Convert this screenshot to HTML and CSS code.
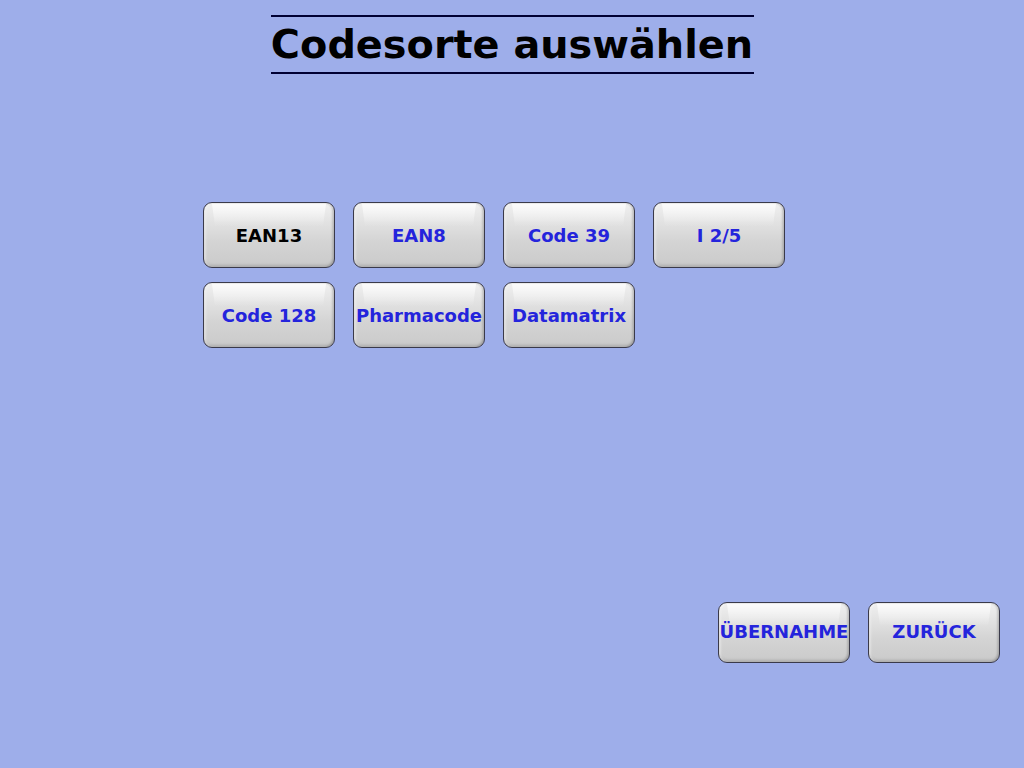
FILE: index.html
```html
<!DOCTYPE html>
<html>
<head>
<meta charset="utf-8">
<link rel="stylesheet" href="styles.css">
</head>
<body>
<div class="screen">
  <header class="title-wrap">
    <h1 class="title">Codesorte auswählen</h1>
  </header>
  <div class="grid">
    <button class="btn selected">EAN13</button>
    <button class="btn">EAN8</button>
    <button class="btn">Code 39</button>
    <button class="btn">I 2/5</button>
    <button class="btn">Code 128</button>
    <button class="btn">Pharmacode</button>
    <button class="btn">Datamatrix</button>
  </div>
  <div class="actions">
    <button class="btn small">ÜBERNAHME</button>
    <button class="btn small">ZURÜCK</button>
  </div>
</div>
</body>
</html>
```
FILE: styles.css
```css
html, body {
  margin: 0;
  padding: 0;
  background: #9eaeea;
}
.screen {
  width: 1024px;
  height: 768px;
  position: relative;
  font-family: "DejaVu Sans", sans-serif;
}
.title-wrap {
  display: flex;
  justify-content: center;
  padding-top: 15px;
}
.title {
  margin: 0;
  font-size: 39.8px;
  font-weight: bold;
  color: #000;
  border-top: 2px solid #000033;
  border-bottom: 2px solid #000033;
  width: 483px;
  text-align: center;
  white-space: nowrap;
  line-height: 55px;
  height: 55px;
}
.grid {
  display: grid;
  grid-template-columns: repeat(4, 132px);
  grid-auto-rows: 66px;
  column-gap: 18px;
  row-gap: 14px;
  margin-left: 203px;
  margin-top: 128px;
}
.btn {
  position: relative;
  box-sizing: border-box;
  width: 132px;
  height: 66px;
  padding: 0;
  border: 1px solid #3a3a4a;
  border-radius: 9px;
  background: linear-gradient(to bottom, #f0f0f0 0%, #e2e2e2 30%, #d4d4d4 60%, #cacaca 100%);
  box-shadow: inset 0 -2px 3px rgba(0,0,0,0.15), inset 2px 0 2px rgba(255,255,255,0.5), inset -2px 0 2px rgba(0,0,0,0.12);
  font-family: "DejaVu Sans", sans-serif;
  font-weight: bold;
  font-size: 18px;
  color: #2424dc;
  overflow: hidden;
  white-space: nowrap;
}
.btn::before {
  content: "";
  position: absolute;
  left: 8px;
  right: 8px;
  top: 1px;
  height: 22px;
  background: linear-gradient(to bottom, rgba(255,255,255,0.75), rgba(255,255,255,0));
  clip-path: polygon(0 0, 100% 0, calc(100% - 3px) 100%, 3px 100%);
}
.btn.selected {
  color: #000;
}
.actions {
  position: absolute;
  left: 718px;
  top: 602px;
  display: flex;
  gap: 18px;
}
.btn.small {
  height: 61px;
  padding-bottom: 3px;
}
```
